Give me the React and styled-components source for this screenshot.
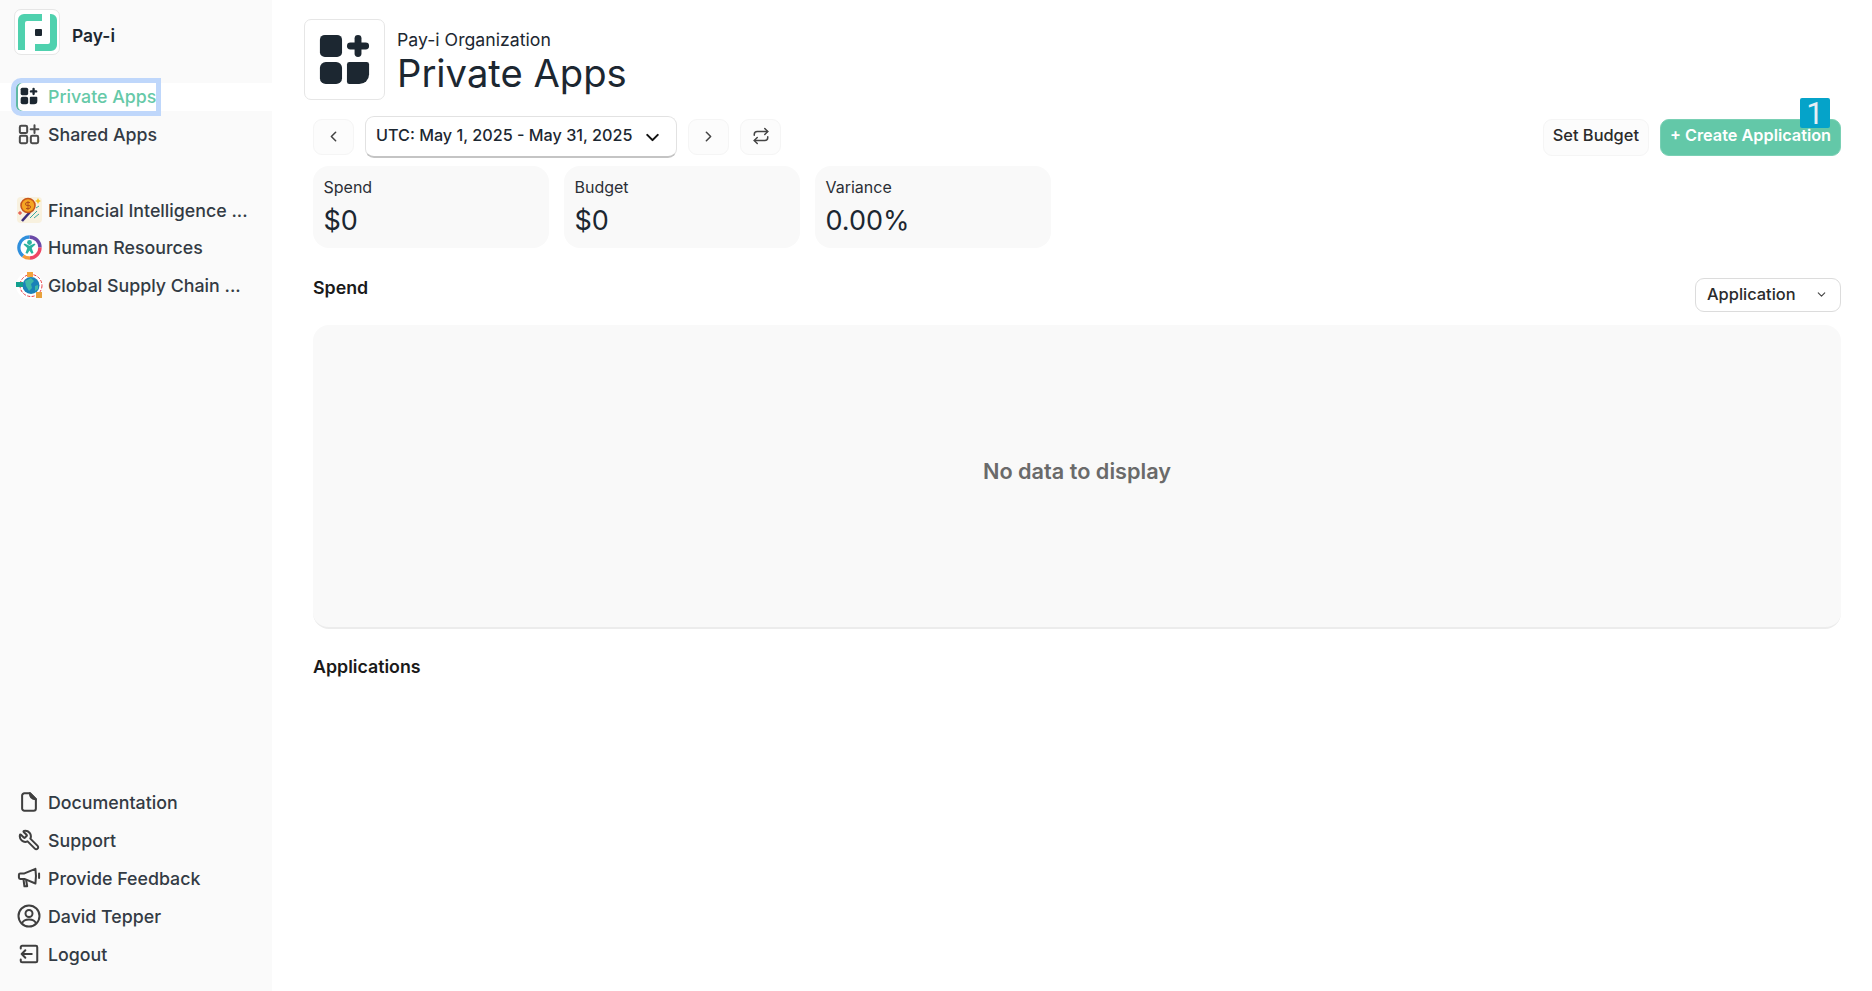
import React from 'react';
import styled, { createGlobalStyle } from 'styled-components';
import { ChevronLeft, ChevronRight, ChevronDown, Repeat, Wrench } from 'lucide-react';

const GlobalStyle = createGlobalStyle`
  html, body { margin: 0; padding: 0; background: #fff; }
  body { font-family: Inter, "Noto Sans", sans-serif; color: #1c2731; }
  * { box-sizing: border-box; }
`;

const Page = styled.div`
  display: flex;
  width: 1872px;
  height: 991px;
  overflow: hidden;
`;

const Sidebar = styled.aside`
  width: 272px;
  flex: none;
  height: 100%;
  background: #fafafa;
  display: flex;
  flex-direction: column;
  padding: 9px 0 22px 0;
`;

const Brand = styled.div`
  display: flex;
  align-items: center;
  gap: 12px;
  padding-left: 14px;
  margin-bottom: 28px;
`;

const LogoBox = styled.div`
  width: 46px;
  height: 46px;
  background: #fff;
  border: 1px solid #e6e6e6;
  border-radius: 7px;
  display: flex;
  align-items: center;
  justify-content: center;
`;

const BrandName = styled.span`
  font-size: 17.4px;
  font-weight: 600;
  color: #1c2731;
  padding-top: 6px;
`;

const NavGroup = styled.nav`
  display: flex;
  flex-direction: column;
  gap: ${p => p.$gap || 10}px;
  margin-top: ${p => p.$top || 0}px;
`;

const NavRow = styled.div`
  display: flex;
  align-items: center;
  height: 28px;
  padding-left: 17px;
  padding-bottom: 2px;
  gap: 7px;
  font-size: 17.8px;
  font-weight: 500;
  color: #333b44;
  white-space: nowrap;
  background: ${p => (p.$active ? '#fff' : 'transparent')};
`;

const ActiveLabel = styled.span`
  display: flex;
  align-items: center;
  gap: 7px;
  height: 28px;
  width: 140px;
  margin: 2px 0 0 -1px;
  padding: 0 0 2px 1px;
  color: #66c9a8;
  border-radius: 5px 0 0 5px;
  box-shadow: inset 2px 0 0 #5fb9a5;
  outline: 5px solid #bfd7fb;
`;

const NavIcon = styled.span`
  width: 24px;
  height: 24px;
  flex: none;
  display: flex;
  align-items: center;
  justify-content: center;
  svg { flex: none; }
`;

const MirrorIcon = styled(Wrench)`
  transform: scaleX(-1);
`;

const Spacer = styled.div`
  flex: 1;
`;

const Main = styled.main`
  flex: 1;
  min-width: 0;
  padding: 19px 31px 0 32px;
`;

const Header = styled.header`
  display: flex;
  align-items: center;
  gap: 12px;
`;

const HeaderIcon = styled.div`
  width: 81px;
  height: 81px;
  border: 1px solid #e6e6e6;
  border-radius: 7px;
  display: flex;
  align-items: center;
  justify-content: center;
`;

const Titles = styled.div`
  display: flex;
  flex-direction: column;
  padding-top: 7px;
`;

const Org = styled.div`
  font-size: 17.7px;
  line-height: 20px;
  color: #1c2731;
`;

const Title = styled.h1`
  margin: 0;
  font-size: 38.2px;
  line-height: 46px;
  font-weight: 400;
  color: #1c2731;
`;

const Content = styled.div`
  padding-left: 9px;
`;

const Toolbar = styled.div`
  display: flex;
  align-items: center;
  gap: 11px;
  height: 42px;
  margin-top: 16px;
`;

const IconButton = styled.button`
  width: 41px;
  height: 36px;
  padding: 0 0 2px;
  border: 1px solid #f5f5f5;
  border-radius: 9px;
  background: #fcfcfc;
  color: #444;
  display: flex;
  align-items: center;
  justify-content: center;
`;

const DateButton = styled.button`
  width: 312px;
  height: 42px;
  border: 1px solid #e2e2e2;
  border-bottom: 2px solid #c4c4c4;
  border-radius: 9px;
  background: #fff;
  padding: 0 13px 4px 10px;
  font-family: inherit;
  font-size: 16.2px;
  font-weight: 500;
  color: #1c2731;
  display: flex;
  align-items: center;
  justify-content: space-between;
`;

const DateChevron = styled(ChevronDown)`
  position: relative;
  top: 3px;
`;

const Grow = styled.div`
  flex: 1;
`;

const TextButton = styled.button`
  height: 37px;
  padding: 0 9px 4px;
  margin-right: 0;
  border: 1px solid #f5f5f5;
  border-radius: 9px;
  background: #fcfcfc;
  font-family: inherit;
  font-size: 16.4px;
  font-weight: 500;
  color: #2b2b2b;
`;

const PrimaryWrap = styled.div`
  position: relative;
`;

const PrimaryButton = styled.button`
  height: 37px;
  width: 181px;
  padding: 0 0 4px;
  border: 1px solid #79d0b4;
  border-radius: 9px;
  background: #63c8a8;
  font-family: inherit;
  font-size: 16.3px;
  font-weight: 600;
  color: #fff;
`;

const Badge = styled.div`
  position: absolute;
  top: -21px;
  right: 11px;
  width: 30px;
  height: 30px;
  background: #05a3c9;
  border-radius: 2px;
  color: #e6eef5;
  font-family: "Roboto", sans-serif;
  font-size: 31px;
  line-height: 31px;
  text-align: center;
`;

const Cards = styled.div`
  display: flex;
  gap: 15px;
  margin-top: 8px;
`;

const Card = styled.div`
  width: 236px;
  height: 82px;
  background: #f9f9f9;
  border-radius: 16px;
  padding: 11px 10.5px;
`;

const CardLabel = styled.div`
  font-size: 16px;
  line-height: 20px;
  color: #2b2f36;
`;

const CardValue = styled.div`
  font-size: 27px;
  line-height: 34px;
  margin-top: 7px;
  color: #1c2731;
`;

const SectionHead = styled.div`
  display: flex;
  align-items: center;
  justify-content: space-between;
  height: 34px;
  margin-top: 30px;
`;

const SectionTitle = styled.h2`
  margin: 0;
  font-size: 17.8px;
  font-weight: 600;
  color: #1a1a1a;
  position: relative;
  top: -8px;
`;

const Select = styled.div`
  width: 146px;
  height: 34px;
  border: 1px solid #dcdcdc;
  border-radius: 9px;
  padding: 0 12px 2px 11px;
  display: flex;
  align-items: center;
  justify-content: space-between;
  font-size: 16.4px;
  font-weight: 500;
  color: #2b2b2b;
`;

const ChartPanel = styled.div`
  height: 304px;
  margin-top: 13px;
  padding-bottom: 10px;
  background: #f9f9f9;
  border-bottom: 2px solid #ececec;
  border-radius: 16px;
  display: flex;
  align-items: center;
  justify-content: center;
  font-size: 21.7px;
  font-weight: 600;
  color: #6a6a6a;
`;

const Applications = styled.h2`
  margin: 27px 0 0;
  font-size: 17.8px;
  line-height: 22px;
  font-weight: 600;
  color: #1a1a1a;
`;

const PayiLogo = () => (
  <svg width="40" height="40" viewBox="0 0 40 40" fill="#4fd1ae">
    <path d="M25 2H7a6 6 0 0 0-6 6v30h7V11a2 2 0 0 1 2-2h15z" />
    <path d="M33 2h1a6 6 0 0 1 6 6v25a6 6 0 0 1-6 6H18v-7h13a2 2 0 0 0 2-2z" />
    <rect x="18" y="17" width="7" height="7" rx="1" fill="#1c2731" />
  </svg>
);

const AppsFilled = ({ size }) => (
  <svg width={size} height={size} viewBox="0 0 24 24" fill="#1c2731">
    <rect x="2" y="2" width="9" height="9" rx="2" />
    <rect x="2" y="13" width="9" height="9" rx="2.4" />
    <path d="M14 13h7a1 1 0 0 1 1 1v4a4 4 0 0 1-4 4h-4a1 1 0 0 1-1-1v-7a1 1 0 0 1 1-1z" />
    <rect x="16.1" y="2" width="2.8" height="9" rx="1.4" />
    <rect x="13" y="5.1" width="9" height="2.8" rx="1.4" />
  </svg>
);

const AppsOutline = () => (
  <svg width="22" height="22" viewBox="0 0 24 24" fill="none" stroke="#4b4b4b" strokeWidth="2.2">
    <rect x="2" y="3" width="8" height="8" rx="1.5" />
    <rect x="2" y="14" width="8" height="8" rx="1.5" />
    <rect x="14" y="14" width="8" height="8" rx="1.5" />
    <path d="M18 2.500v8.500M13.800 6.800h8.400" strokeLinecap="round" />
  </svg>
);

const FinanceIcon = () => (
  <svg width="25" height="26" viewBox="0 0 25 26">
    <rect width="25" height="26" rx="4" fill="#f8f1df" />
    <path d="M13 15L5 24" stroke="#3b2d7a" strokeWidth="2.6" />
    <circle cx="11" cy="8.500" r="7" fill="#f5a623" stroke="#c8551b" strokeWidth="1.6" />
    <path d="M13 5.500h-3a1.300 1.300 0 0 0 0 3h2a1.300 1.300 0 0 1 0 3H9M11 4v9" stroke="#b5501a" strokeWidth="1" fill="none" />
    <path d="M21 1l1 2 2 1-2 1-1 2-1-2-2-1 2-1z" fill="#f7c520" />
    <path d="M13 21l7-7M17 21l5-4M19 11l3-2" stroke="#3aa8a0" strokeWidth="1" />
    <path d="M1 16h4M3 14v4" stroke="#e0392d" strokeWidth="1" />
  </svg>
);

const HrIcon = () => (
  <svg width="25" height="25" viewBox="0 0 25 25" fill="none">
    <circle cx="12.500" cy="12.500" r="10.500" fill="#fff" />
    <path d="M12.500 2A10.500 10.500 0 0 1 23 12.500" stroke="#6b4aa8" strokeWidth="3.4" />
    <path d="M23 12.500A10.500 10.500 0 0 1 13 23" stroke="#ef4565" strokeWidth="3.4" />
    <path d="M13 23A10.500 10.500 0 0 1 6 20.800" stroke="#f59a3e" strokeWidth="3.4" />
    <path d="M6 20.800A10.500 10.500 0 0 1 12.500 2" stroke="#2f8fdc" strokeWidth="3.4" />
    <circle cx="12.500" cy="7.500" r="2.400" fill="#2bb3a0" />
    <path d="M6.500 9.500l1.200-1 4.800 2.200 4.800-2.200 1.200 1-3.800 3.500 1.800 5-2 .8-2-3.200-2 3.200-2-.8 1.800-5z" fill="#2bb3a0" />
  </svg>
);

const GlobeIcon = () => (
  <svg width="27" height="27" viewBox="0 0 27 27" fill="none">
    <circle cx="13.500" cy="13.500" r="13.500" fill="#fff" />
    <circle cx="15" cy="13.500" r="11" stroke="#e8373f" strokeWidth="1" strokeDasharray="3 1.500" />
    <circle cx="15" cy="13.500" r="8.500" fill="#1b82b8" />
    <path d="M9 9l6-3 3 3-3 3 1 4-3 3-3-5zM19 14l3-1v4l-3 2z" fill="#3fb8a6" />
    <rect x="0" y="10" width="7" height="5" fill="#12a08f" />
    <rect x="11" y="0" width="6" height="5" fill="#f3a33c" />
    <rect x="20" y="20" width="6" height="6" fill="#e8a13c" />
  </svg>
);

const DocIcon = () => (
  <svg width="22" height="22" viewBox="0 0 24 24" fill="none" stroke="#3f3f3f" strokeWidth="2.2" strokeLinejoin="round">
    <path d="M13 2.500H7A2.500 2.500 0 0 0 4.500 5v14A2.500 2.500 0 0 0 7 21.500h10a2.500 2.500 0 0 0 2.500-2.500V9z" />
    <path d="M13 2.500c0 4 2 6.500 6.500 6.500z" fill="#3f3f3f" />
  </svg>
);

const MegaphoneIcon = () => (
  <svg width="24" height="22" viewBox="0 0 26 24" fill="none" stroke="#3f3f3f" strokeWidth="2.2" strokeLinejoin="round" strokeLinecap="round">
    <path d="M20 2L8 7H3.500A1.500 1.500 0 0 0 2 8.500v3A1.500 1.500 0 0 0 3.500 13H8l12 5c.8-5 .8-11 0-16z" />
    <path d="M7 13.500l1 7.500h3l-1-6M24 7v5" />
  </svg>
);

const UserIcon = () => (
  <svg width="24" height="24" viewBox="0 0 24 24" fill="none" stroke="#3f3f3f" strokeWidth="2">
    <circle cx="12" cy="12" r="10.500" />
    <circle cx="12" cy="9.500" r="3.500" />
    <path d="M5 19.500c1-3 3.500-4 7-4s6 1 7 4" />
  </svg>
);

const LogoutIcon = () => (
  <svg width="22" height="22" viewBox="0 0 24 24" fill="none" stroke="#3f3f3f" strokeWidth="2.2" strokeLinecap="round" strokeLinejoin="round">
    <path d="M3 6V4.500A1.500 1.500 0 0 1 4.500 3h15A1.500 1.500 0 0 1 21 4.500v15a1.500 1.500 0 0 1-1.500 1.500h-15A1.500 1.500 0 0 1 3 19.500V18" />
    <path d="M15 12H4M8 8l-4 4 4 4" />
  </svg>
);

const appItems = [
  { name: 'Financial Intelligence ...', icon: <FinanceIcon /> },
  { name: 'Human Resources', icon: <HrIcon /> },
  { name: 'Global Supply Chain ...', icon: <GlobeIcon /> },
];

const footerItems = [
  { name: 'Documentation', icon: <DocIcon /> },
  { name: 'Support', icon: <MirrorIcon size={22} color="#3f3f3f" strokeWidth={2.2} /> },
  { name: 'Provide Feedback', icon: <MegaphoneIcon /> },
  { name: 'David Tepper', icon: <UserIcon /> },
  { name: 'Logout', icon: <LogoutIcon /> },
];

export default function App() {
  return (
    <Page>
      <GlobalStyle />
      <Sidebar>
        <Brand>
          <LogoBox><PayiLogo /></LogoBox>
          <BrandName>Pay-i</BrandName>
        </Brand>
        <NavGroup>
          <NavRow $active>
            <ActiveLabel>
              <NavIcon><AppsFilled size={20} /></NavIcon>
              Private Apps
            </ActiveLabel>
          </NavRow>
          <NavRow>
            <NavIcon><AppsOutline /></NavIcon>
            Shared Apps
          </NavRow>
        </NavGroup>
        <NavGroup $top={48} $gap={9.5}>
          {appItems.map(item => (
            <NavRow key={item.name}>
              <NavIcon>{item.icon}</NavIcon>
              {item.name}
            </NavRow>
          ))}
        </NavGroup>
        <Spacer />
        <NavGroup>
          {footerItems.map(item => (
            <NavRow key={item.name}>
              <NavIcon>{item.icon}</NavIcon>
              {item.name}
            </NavRow>
          ))}
        </NavGroup>
      </Sidebar>
      <Main>
        <Header>
          <HeaderIcon><AppsFilled size={59} /></HeaderIcon>
          <Titles>
            <Org>Pay-i Organization</Org>
            <Title>Private Apps</Title>
          </Titles>
        </Header>
        <Content>
          <Toolbar>
            <IconButton><ChevronLeft size={17} strokeWidth={2.2} /></IconButton>
            <DateButton>
              UTC: May 1, 2025 - May 31, 2025
              <DateChevron size={21} color="#111" strokeWidth={2.4} />
            </DateButton>
            <IconButton><ChevronRight size={17} strokeWidth={2.2} /></IconButton>
            <IconButton><Repeat size={18} /></IconButton>
            <Grow />
            <TextButton>Set Budget</TextButton>
            <PrimaryWrap>
              <PrimaryButton>+ Create Application</PrimaryButton>
              <Badge>1</Badge>
            </PrimaryWrap>
          </Toolbar>
          <Cards>
            <Card><CardLabel>Spend</CardLabel><CardValue>$0</CardValue></Card>
            <Card><CardLabel>Budget</CardLabel><CardValue>$0</CardValue></Card>
            <Card><CardLabel>Variance</CardLabel><CardValue>0.00%</CardValue></Card>
          </Cards>
          <SectionHead>
            <SectionTitle>Spend</SectionTitle>
            <Select>Application <ChevronDown size={13} color="#444" /></Select>
          </SectionHead>
          <ChartPanel>No data to display</ChartPanel>
          <Applications>Applications</Applications>
        </Content>
      </Main>
    </Page>
  );
}
